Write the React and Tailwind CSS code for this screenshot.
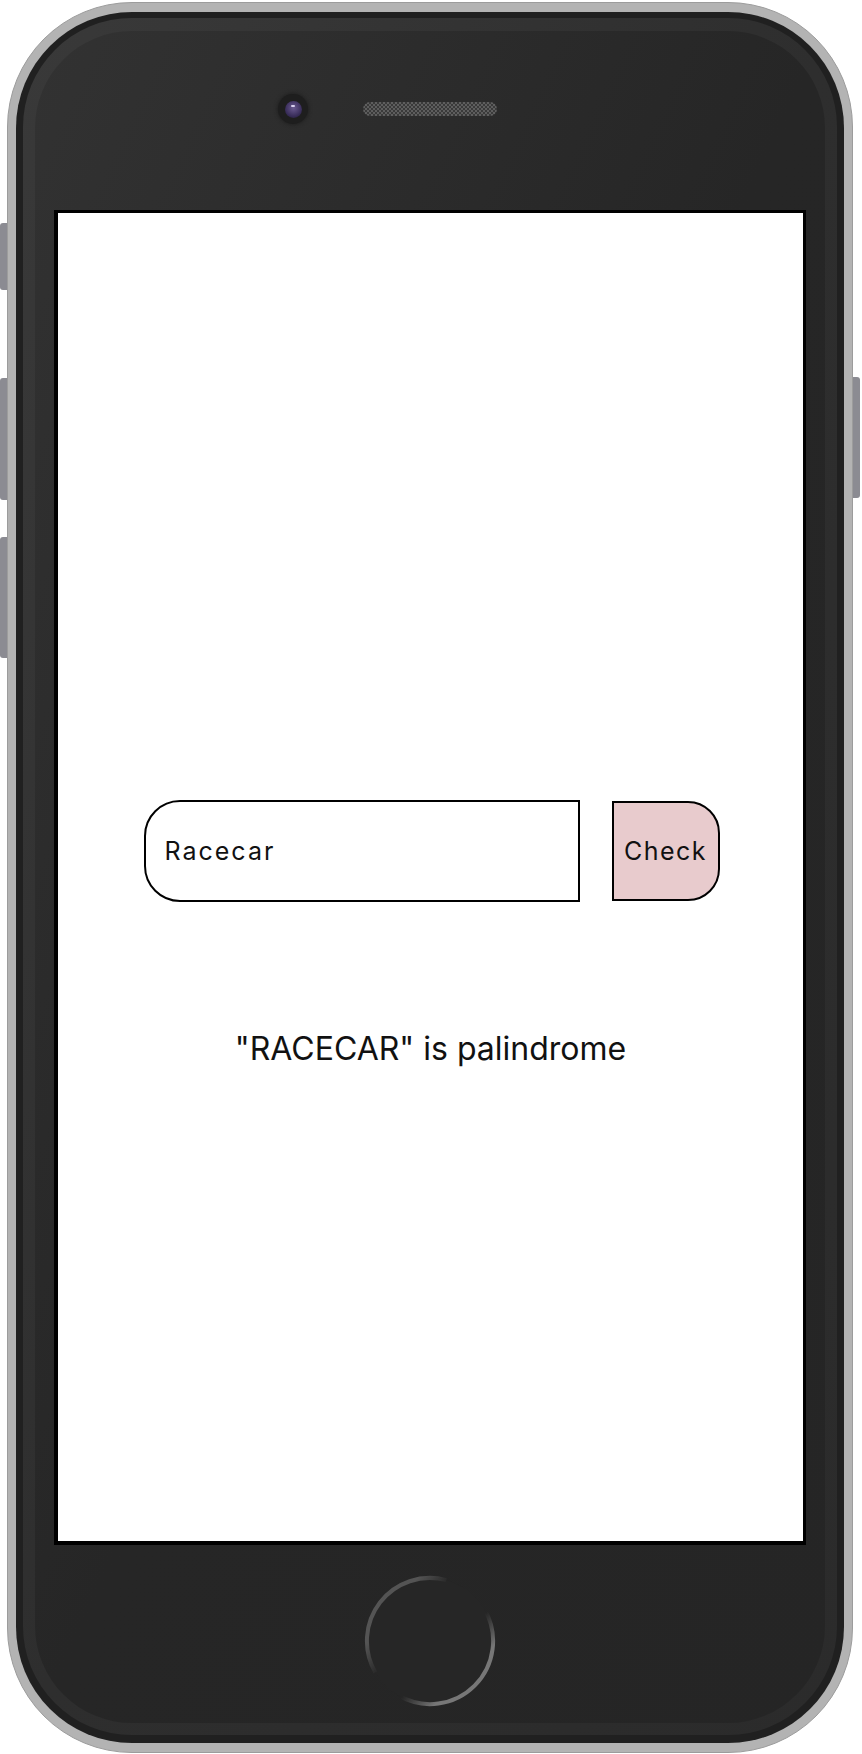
import React from "react";

function HomeButton() {
  return (
    <svg width="134" height="134" viewBox="0 0 134 134">
      <defs>
        <linearGradient id="ringRight" gradientUnits="userSpaceOnUse" x1="67" y1="67" x2="113" y2="113">
          <stop offset="0.3" stopColor="#6b6b6b" stopOpacity="0" />
          <stop offset="0.75" stopColor="#777777" stopOpacity="1" />
        </linearGradient>
        <linearGradient id="ringLeft" gradientUnits="userSpaceOnUse" x1="67" y1="67" x2="19" y2="30">
          <stop offset="0.35" stopColor="#555555" stopOpacity="0" />
          <stop offset="0.8" stopColor="#545454" stopOpacity="1" />
        </linearGradient>
      </defs>
      <circle cx="67" cy="67" r="63" fill="#262626" />
      <path d="M 121.6 35.5 A 63 63 0 0 1 35.5 121.6" fill="none" stroke="url(#ringRight)" strokeWidth="4" />
      <path d="M 12.4 98.5 A 63 63 0 0 1 83.3 6.1" fill="none" stroke="url(#ringLeft)" strokeWidth="4" />
    </svg>
  );
}

function Speaker() {
  return (
    <svg width="134" height="14" viewBox="0 0 134 14">
      <defs>
        <pattern id="mesh" width="4" height="4" patternUnits="userSpaceOnUse">
          <rect width="4" height="4" fill="#3a3a3a" />
          <rect width="2" height="2" fill="#5e5e5e" />
          <rect x="2" y="2" width="2" height="2" fill="#5e5e5e" />
        </pattern>
      </defs>
      <rect width="134" height="14" rx="7" fill="url(#mesh)" />
    </svg>
  );
}

function Camera() {
  return (
    <div className="w-[30px] h-[30px] rounded-full bg-[#1e1e1e] shadow-[0_0_4px_#1a1a1a] flex items-center justify-center">
      <div className="w-[17px] h-[17px] rounded-full bg-[radial-gradient(circle_at_50%_40%,#6a5a90,#3b2f5c_60%,#1d1830)] flex justify-center pt-[4px]">
        <div className="w-[4px] h-[2px] rounded-full bg-[#d8d0ee]" />
      </div>
    </div>
  );
}

export default function App() {
  return (
    <div className="relative w-[862px] h-[1754px] bg-white font-['Inter',sans-serif] overflow-hidden">
      {/* side buttons */}
      <div className="absolute left-0 top-[223px] w-[8px] h-[67px] rounded-l-[3px] bg-[#8b8b92]" />
      <div className="absolute left-0 top-[378px] w-[8px] h-[122px] rounded-l-[3px] bg-[#8b8b92]" />
      <div className="absolute left-0 top-[537px] w-[8px] h-[121px] rounded-l-[3px] bg-[#8b8b92]" />
      <div className="absolute left-[852px] top-[377px] w-[8px] h-[121px] rounded-r-[3px] bg-[#8b8b92]" />

      {/* phone body */}
      <div className="relative ml-[7px] mt-[2px] w-[846px] h-[1751px] rounded-[125px] bg-[#b3b3b3] border border-[#9c9c9c] pt-[9px] pb-[9px] px-[8px] flex">
        <div className="flex-1 rounded-[116px] bg-[#202020] pt-[6px] pb-[8px] px-[7px] flex">
          <div className="flex-1 rounded-[109px] bg-linear-to-br from-[#393939] via-[#2e2e2e] to-[#2b2b2b] pt-[13px] pb-[12px] px-[12px] flex">
            <div className="flex-1 rounded-[97px] bg-linear-to-br from-[#323232] via-[#262626] to-[#252525] flex flex-col">
              {/* top bezel */}
              <div className="h-[179px] flex justify-center pt-[63px]">
                <div className="flex items-center gap-[55px] h-[30px]">
                  <Camera />
                  <Speaker />
                  <div className="w-[30px]" />
                </div>
              </div>

              {/* screen */}
              <div className="mx-[19px] h-[1335px] bg-white border-black border-l-4 border-b-4 border-t-[3px] border-r-[3px] flex flex-col items-center pt-[587px]">
                <div className="flex items-center gap-[32px] ml-[2px]">
                  <div className="w-[436px] h-[102px] rounded-l-[36px] border-2 border-black flex items-center px-[19px]">
                    <span className="text-[25px] leading-[30px] text-[#111] tracking-[0.08em]">Racecar</span>
                  </div>
                  <button className="w-[108px] h-[100px] rounded-r-[32px] bg-[#e8cbcd] border-2 border-black flex items-center justify-center text-[25px] leading-[30px] text-[#111] tracking-[0.06em]">
                    Check
                  </button>
                </div>
                <p className="mt-[123px] text-[32px] leading-[48px] text-[#111]">
                  "RACECAR" is palindrome
                </p>
              </div>

              {/* bottom bezel */}
              <div className="flex-1 flex justify-center pt-[29px]">
                <HomeButton />
              </div>
            </div>
          </div>
        </div>
      </div>
    </div>
  );
}
